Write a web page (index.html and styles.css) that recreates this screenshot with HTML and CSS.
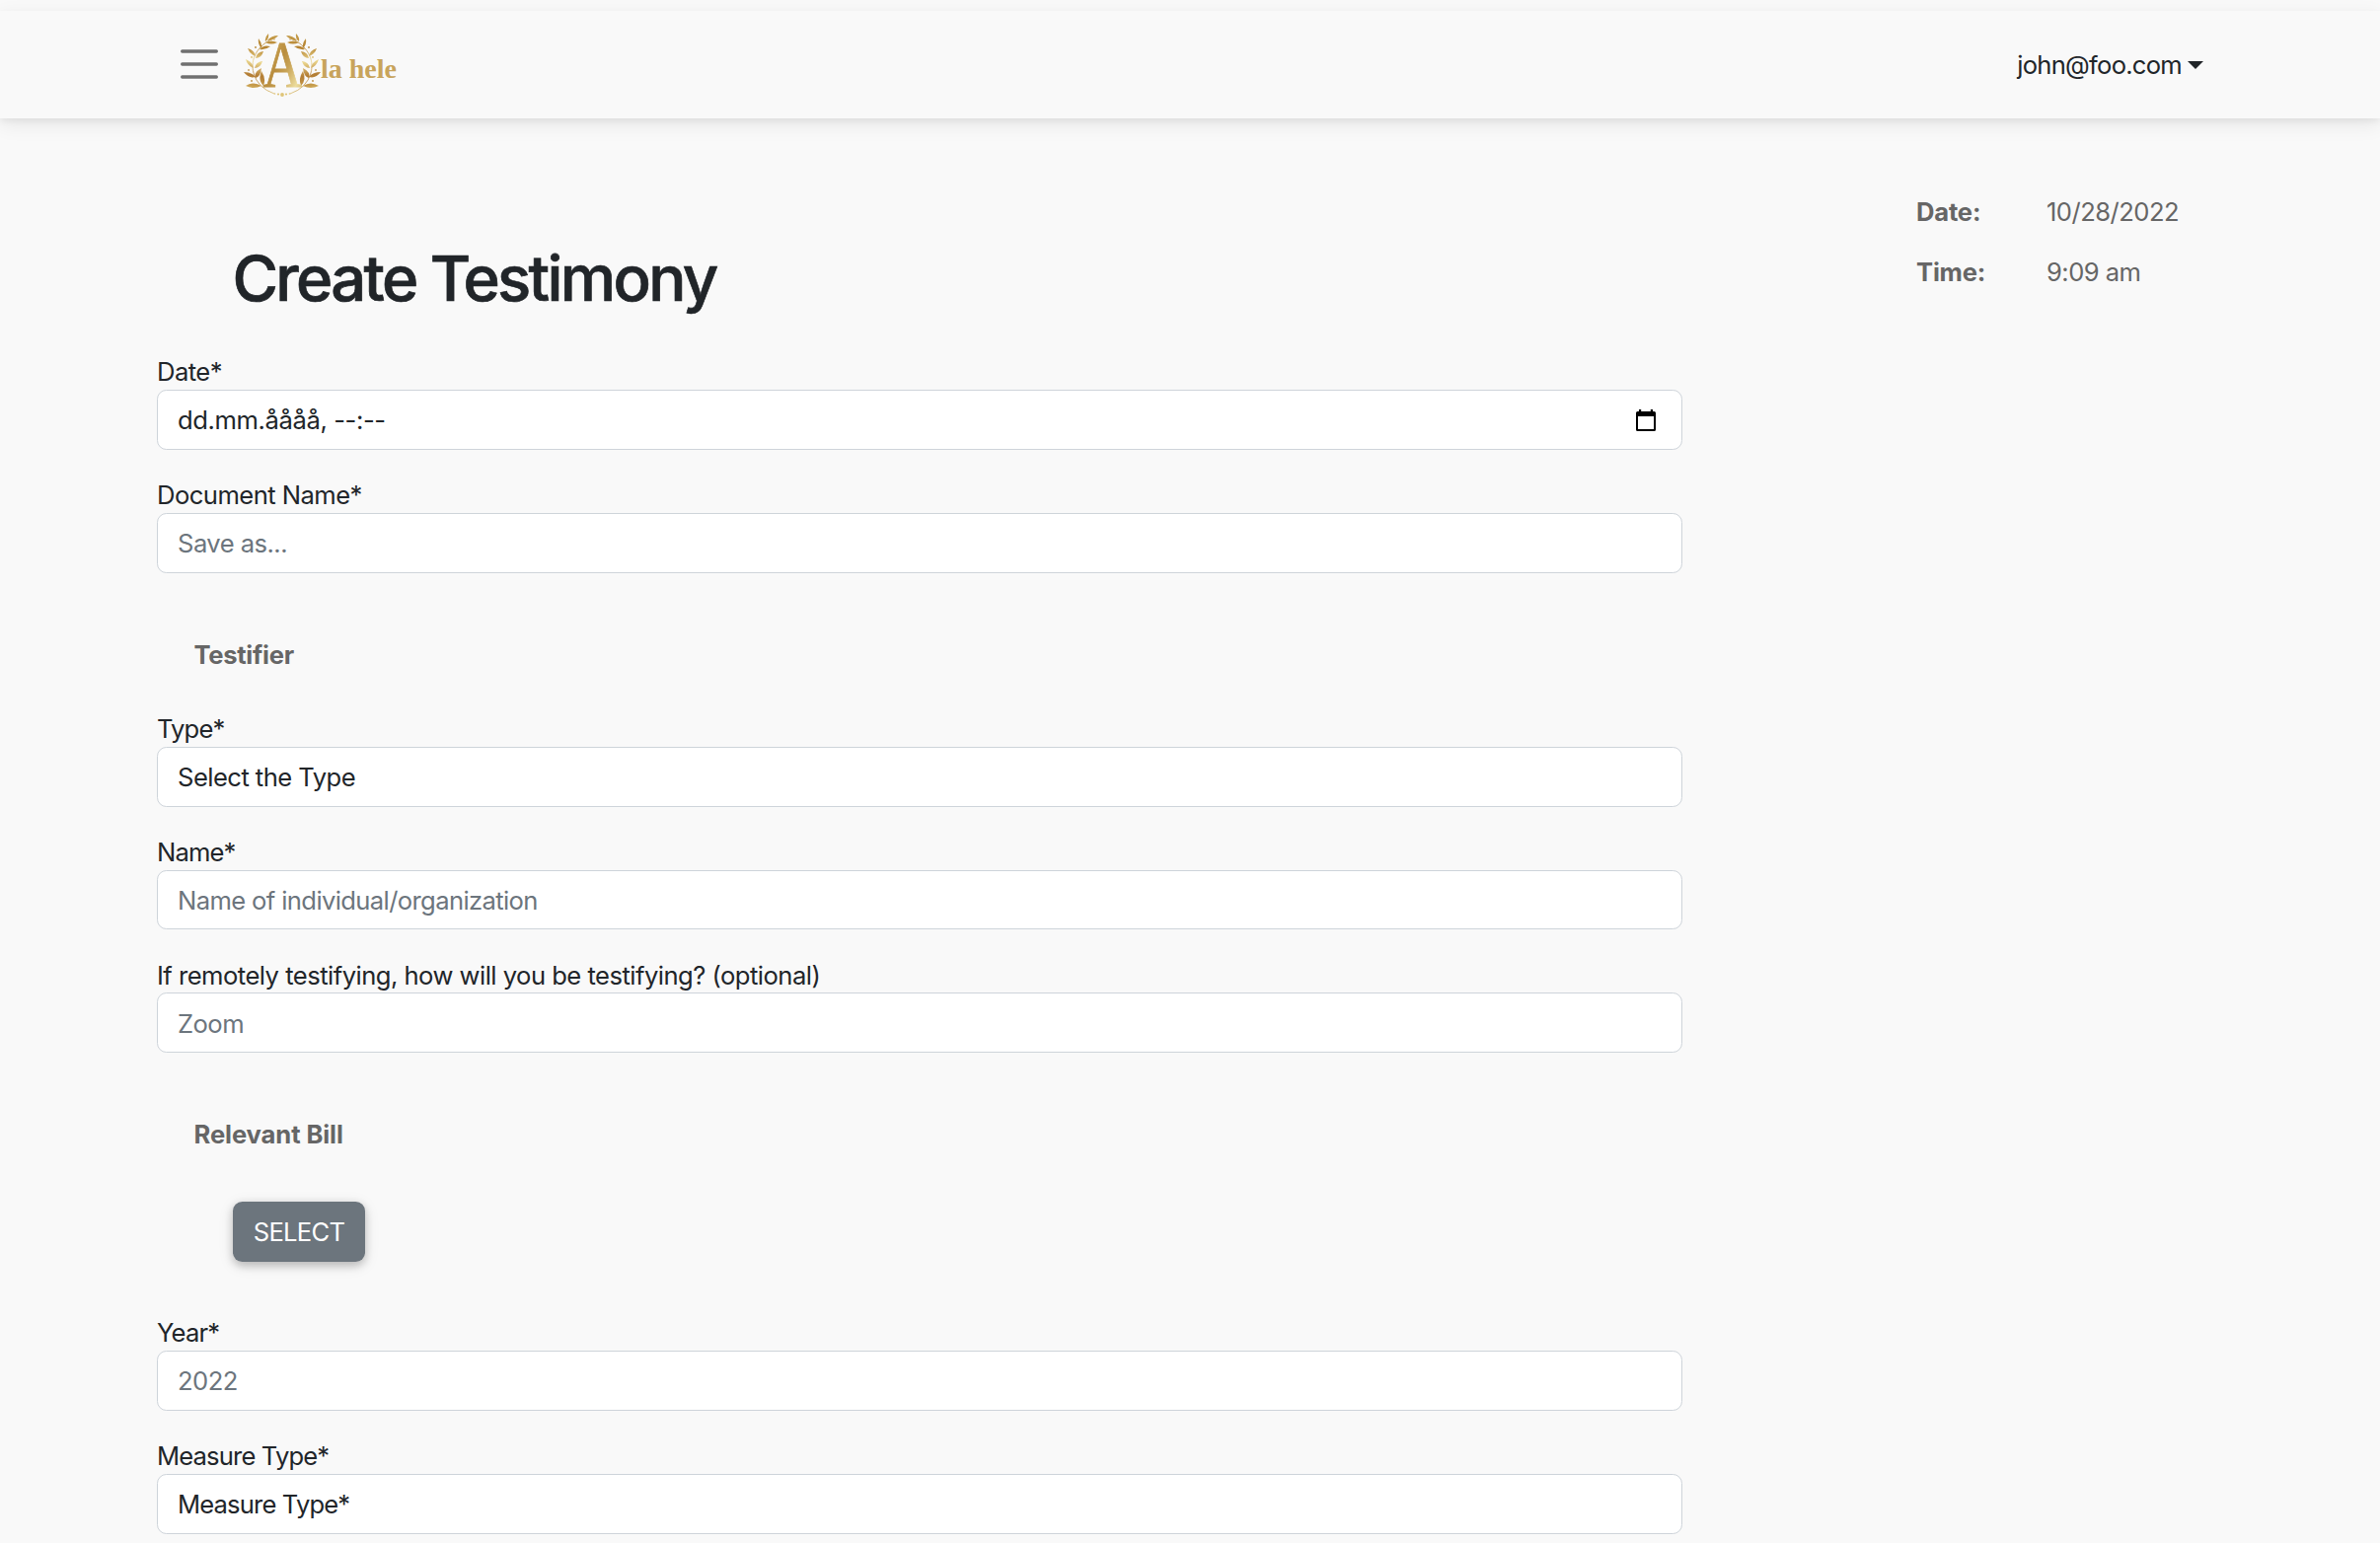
FILE: index.html
```html
<!DOCTYPE html>
<html lang="en">
<head>
<meta charset="utf-8">
<title>Create Testimony</title>
<link rel="stylesheet" href="styles.css">
</head>
<body>
<header class="navbar">
  <button class="menu" aria-label="Menu"><svg width="38" height="30" viewBox="0 0 38 30"><path d="M1.700 2H36.300M1.700 15H36.300M1.700 28H36.300" stroke="#707070" stroke-width="3.400" stroke-linecap="round"/></svg></button>
  <a class="brand">
    <svg class="wreath" width="78" height="66" viewBox="0 0 78 66">
      <defs>
        <linearGradient id="gold" x1="0" y1="0" x2="1" y2="1"><stop offset="0" stop-color="#dcbc6c"/><stop offset=".45" stop-color="#b98d3e"/><stop offset=".6" stop-color="#c8a356"/><stop offset=".82" stop-color="#ecdc9c"/><stop offset="1" stop-color="#d0ac5c"/></linearGradient>
        <linearGradient id="leafgold" gradientUnits="userSpaceOnUse" x1="20" y1="2" x2="10" y2="62"><stop offset="0" stop-color="#c39a48"/><stop offset=".2" stop-color="#b5822f"/><stop offset=".45" stop-color="#ecd890"/><stop offset=".68" stop-color="#b37d35"/><stop offset=".85" stop-color="#c79d4c"/><stop offset="1" stop-color="#e8d58c"/></linearGradient>
        <g id="branch" fill="url(#leafgold)">
          <path d="M30 5C14 12 6 26 10 40Q14 55 31 61" fill="none" stroke="url(#leafgold)" stroke-width=".8"/>
          <path d="M35 2Q28 2 24 7Q31 7 35 2ZM34 9Q28 6 22 9Q28 12 34 9ZM25 0Q21 4 22 8Q26 5 25 0ZM15 5Q14 11 18 15Q19 10 15 5ZM27 13Q20 11 16 16Q22 17 27 13ZM4 15Q6 21 12 23Q11 17 4 15ZM20 18Q13 19 12 25Q18 25 20 18ZM2 26Q4 33 10 35Q9 29 2 26ZM19 28Q12 29 11 35Q17 35 19 28ZM0 39Q5 46 12 44Q8 39 0 39ZM18 35Q10 39 12 45Q17 44 18 35ZM2 53Q10 57 18 53Q10 48 2 53ZM18 38Q14 47 20 53Q23 46 18 38Z"/>
          <circle cx="12" cy="14" r=".9"/><circle cx="8" cy="24" r=".9"/><circle cx="5" cy="37" r=".9"/><circle cx="8" cy="48" r=".9"/><circle cx="31" cy="6" r=".7"/>
        </g>
      </defs>
      <use href="#branch"/><use href="#branch" transform="translate(78 0) scale(-1 1)"/>
      <text class="monogram" x="19.500" y="53.500" textLength="39.500" lengthAdjust="spacingAndGlyphs" fill="url(#gold)" stroke="url(#gold)">A</text>
      <g fill="#dfc578"><circle cx="39" cy="62" r="1.900"/><circle cx="35" cy="61.500" r="1.100"/><circle cx="43" cy="61.500" r="1.100"/><circle cx="31.500" cy="61" r=".8"/><circle cx="46.500" cy="61" r=".8"/></g>
    </svg>
    <span class="brand-name">la hele</span>
  </a>
  <div class="user"><span class="email">john@foo.com</span><span class="caret"></span></div>
</header>
<main class="page">
  <form class="form">
    <h1 class="title">Create Testimony</h1>
    <div class="field"><label>Date*</label><div class="control date"><span>dd.mm.åååå, --:--</span>
      <svg class="calendar" width="20" height="22" viewBox="0 0 20 22"><path fill-rule="evenodd" d="M3 0h2.200v2h9.600V0H17v2h1.400Q20 2 20 3.600v16.800Q20 22 18.400 22H1.600Q0 22 0 20.400V3.600Q0 2 1.600 2H3ZM2 7v13h16V7Z"/></svg></div></div>
    <div class="field"><label>Document Name*</label><div class="control hint">Save as...</div></div>
    <h2 class="section">Testifier</h2>
    <div class="field"><label class="tight">Type*</label><div class="control">Select the Type</div></div>
    <div class="field"><label class="tight">Name*</label><div class="control hint individual">Name of individual/organization</div></div>
    <div class="field"><label class="remote">If remotely testifying, how will you be testifying? (optional)</label><div class="control hint">Zoom</div></div>
    <h2 class="section bill">Relevant Bill</h2>
    <button type="button" class="select">SELECT</button>
    <div class="field"><label class="tight">Year*</label><div class="control hint">2022</div></div>
    <div class="field"><label class="tight">Measure Type*</label><div class="control tight">Measure Type*</div></div>
  </form>
  <dl class="stamp">
    <dt>Date:</dt><dd>10/28/2022</dd>
    <dt>Time:</dt><dd>9:09 am</dd>
  </dl>
</main>
</body>
</html>
```
FILE: styles.css
```css
* { box-sizing: border-box; }
html { background: #f9f9f9; }
body {
  margin: 0;
  height: 1564px;
  overflow: hidden;
  padding-top: 11px;
  color: #212529;
  font: 400 25.6px/38.4px Inter, "Liberation Sans", sans-serif;
  letter-spacing: -.54px;
}
.navbar {
  display: flex;
  align-items: center;
  height: 109px;
  padding: 0 179px 0 183px;
  background: #f9f9f9;
  box-shadow: 0 6.400px 19.200px rgba(0,0,0,.08), 0 3.200px 6.400px rgba(0,0,0,.05);
}
.menu { display: flex; padding: 0 0 2px; border: 0; background: none; }
.brand { display: flex; margin-left: 26px; }
.wreath { position: relative; top: 1px; overflow: visible; }
.monogram { font: 67px "Liberation Serif", serif; stroke-width: .8px; letter-spacing: 0; }
.brand-name {
  color: #c8a45c;
  font: bold 28px/30px "Liberation Serif", serif;
  letter-spacing: 0;
  padding: 22px 0 0;
}
.user { display: flex; align-items: center; margin-left: auto; }
.email { padding-top: 2px; letter-spacing: -.75px; }
.caret {
  margin-left: 6px;
  border: 8px solid transparent;
  border-top-color: #212529;
  border-bottom: 0;
}
.page { display: flex; padding: 0 159px; }
.form { width: 1546px; padding-top: 123.500px; }
.title {
  margin: 0 0 36.500px;
  padding-left: 76.500px;
  font-size: 63.500px;
  font-weight: 500;
  line-height: 76.800px;
  letter-spacing: -2.700px;
  -webkit-text-stroke: .7px #212529;
}
.field { margin-bottom: 25.600px; }
.field label { display: block; height: 38.400px; padding-top: 1.600px; }
.control {
  display: flex;
  align-items: center;
  justify-content: space-between;
  height: 60.800px;
  padding: 2px 25px 0 20px;
  border: 1px solid #ced4da;
  border-radius: 9.600px;
  background: #fff;
}
.date { letter-spacing: -.4px; }
.calendar { margin: 0 1px 2px 0; }
.hint { color: #6c757d; }
.individual { letter-spacing: -.62px; }
.remote { letter-spacing: -.52px; }
.tight { letter-spacing: -.85px; }
.section {
  margin: 0;
  height: 112px;
  padding: 39px 0 0 37.500px;
  color: #666;
  font-size: 25.600px;
  font-weight: 700;
  line-height: 38.400px;
  letter-spacing: -.3px;
}
.bill { height: 125.400px; padding-top: 38.500px; letter-spacing: -.1px; }
.select {
  display: flex;
  align-items: center;
  justify-content: center;
  width: 134px;
  height: 61px;
  margin: 0 0 51.500px 77px;
  padding: 2px 0 0;
  border: 0;
  border-radius: 9.600px;
  background: #6c757d;
  color: #fff;
  font: inherit;
  letter-spacing: -.7px;
  box-shadow: 0 3.200px 8px rgba(0,0,0,.2), 0 3.200px 16px rgba(0,0,0,.1);
}
.stamp {
  display: grid;
  grid-template-columns: 132px auto;
  grid-auto-rows: 61.400px;
  margin: 76px 0 0 237px;
  color: #666;
}
.stamp dt { font-weight: 700; letter-spacing: -.2px; }
.stamp dd { margin: 0; }
```
